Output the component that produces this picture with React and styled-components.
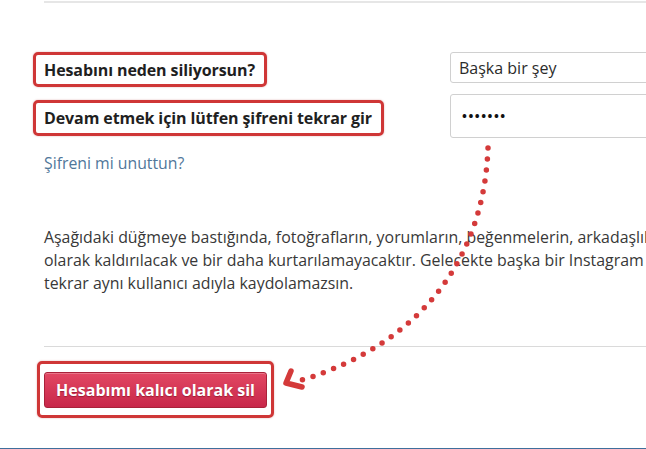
import React from "react";
import styled, { createGlobalStyle } from "styled-components";

const GlobalStyle = createGlobalStyle`
	html, body {
		margin: 0;
		padding: 0;
		background: #fff;
		overflow: hidden;
	}
	body {
		font-family: "Open Sans", "Noto Sans", sans-serif;
		color: #262626;
	}
`;

const Page = styled.div`
	position: relative;
	width: 646px;
	height: 449px;
	overflow: hidden;
	background: #fff;
`;

const Content = styled.div`
	padding-left: 44px;
	width: 800px;
`;

const Rule = styled.div`
	height: ${(p) => p.thick || 2}px;
	background: ${(p) => p.color || "#e6e6e6"};
	margin-top: ${(p) => p.top || 0}px;
`;

const Row = styled.div`
	display: flex;
	align-items: center;
	margin-top: ${(p) => p.top}px;
`;

const LabelCol = styled.div`
	width: 406px;
	flex: none;
`;

const Label = styled.div`
	display: inline-flex;
	align-items: center;
	box-sizing: border-box;
	height: ${(p) => p.h}px;
	margin-left: -11px;
	padding: 0 9px 0 8px;
	border: 3px solid #cf3636;
	border-radius: 5px;
	box-shadow: 0 0 2px rgba(160, 30, 30, 0.35);
	font-size: 16px;
	font-weight: 700;
	color: #1f1f1f;
	white-space: nowrap;
	letter-spacing: -0.1px;
`;

const Field = styled.div`
	box-sizing: border-box;
	width: 320px;
	height: ${(p) => p.h}px;
	margin-bottom: 4px;
	display: flex;
	align-items: center;
	padding-left: 8px;
	border: 1px solid #d0d0d0;
	border-radius: 3px;
	font-size: 16px;
	color: #2b2b2b;
	white-space: nowrap;
`;

const Dots = styled.span`
	font-size: 13px;
	font-weight: 700;
	letter-spacing: 1.5px;
	padding-left: 3px;
	color: #111;
`;

const Link = styled.a`
	display: block;
	margin-top: 10px;
	font-size: 15.8px;
	line-height: 22px;
	color: #50779a;
	text-decoration: none;
`;

const Notice = styled.p`
	margin: 52px 0 0;
	font-size: 15.9px;
	line-height: 23px;
	color: #383838;
	white-space: nowrap;
`;

const ButtonFrame = styled.div`
	display: inline-block;
	margin: 14px 0 0 -7px;
	padding: 8px 4px 7px 4px;
	border: 3px solid #cf3636;
	border-radius: 5px;
	box-shadow: 0 0 2px rgba(160, 30, 30, 0.35);
`;

const DangerButton = styled.button`
	display: block;
	box-sizing: border-box;
	width: 223px;
	height: 36px;
	border: 1px solid #a9223a;
	border-radius: 3px;
	background: linear-gradient(#e24863, #c8274a);
	box-shadow: inset 0 1px 0 rgba(255, 255, 255, 0.25);
	color: #fff;
	font-family: "Open Sans", sans-serif;
	font-size: 16px;
	font-weight: 700;
	text-shadow: 0 1px 1px rgba(90, 0, 20, 0.45);
	cursor: pointer;
`;

const Overlay = styled.svg`
	position: absolute;
	left: 0;
	top: 0;
	pointer-events: none;
`;

const Arrow = () => (
	<Overlay width="646" height="449" viewBox="0 0 646 449">
		<path
			d="M488 148 C484 255 425 342 302 380"
			fill="none"
			stroke="#d43a3a"
			strokeWidth="5.5"
			strokeLinecap="round"
			strokeDasharray="0 11"
		/>
		<path
			d="M291 371 L286 383 L302 387"
			fill="none"
			stroke="#d43a3a"
			strokeWidth="5.5"
			strokeLinecap="round"
			strokeLinejoin="round"
		/>
	</Overlay>
);

export default function App() {
	return (
		<>
			<GlobalStyle />
			<Page>
				<Content>
					<Rule top={1} />
					<Row top={49}>
						<LabelCol>
							<Label h={35}>Hesabını neden siliyorsun?</Label>
						</LabelCol>
						<Field h={31}>Başka bir şey</Field>
					</Row>
					<Row top={7}>
						<LabelCol>
							<Label h={36}>Devam etmek için lütfen şifreni tekrar gir</Label>
						</LabelCol>
						<Field h={44}>
							<Dots>•••••••</Dots>
						</Field>
					</Row>
					<Link href="#">Şifreni mi unuttun?</Link>
					<Notice>
						Aşağıdaki düğmeye bastığında, fotoğrafların, yorumların, beğenmelerin, arkadaşlıkların
						<br />
						olarak kaldırılacak ve bir daha kurtarılamayacaktır. Gelecekte başka bir Instagram
						<br />
						tekrar aynı kullanıcı adıyla kaydolamazsın.
					</Notice>
					<Rule top={51} thick={1} color="#dadada" />
					<ButtonFrame>
						<DangerButton>Hesabımı kalıcı olarak sil</DangerButton>
					</ButtonFrame>
				</Content>
				<Rule top={30} color="#3f6f9c" />
				<Arrow />
			</Page>
		</>
	);
}
